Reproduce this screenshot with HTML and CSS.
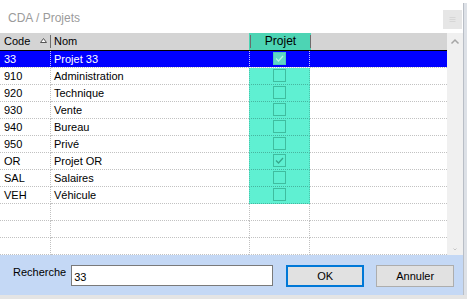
FILE: index.html
```
<!DOCTYPE html>
<html lang="fr">
<head>
    <meta charset="UTF-8">
    <title>CDA / Projets</title>
    <link rel="stylesheet" href="styles.css">
</head>
<body>
    <div class="screen">
        <div class="top-strip"></div>
        <div class="main">
            <div class="dialog">
                <div class="titlebar">
                    <span class="title">CDA / Projets</span>
                    <span class="close">
                        <svg width="19" height="19" viewBox="0 0 19 19"><path d="M6.5 7.5h6M6.5 9.5h6M6.5 11.5h6" stroke="#d6d6d6" stroke-width="1"/></svg>
                    </span>
                </div>
                <div class="content">
                    <div class="grid">
                        <div class="head">
                            <div class="hcell code">Code
                                <svg class="sort" width="7" height="5" viewBox="0 0 7 5"><path d="M0.5 4.5L3.5 0.5L6.5 4.5Z" fill="#fff" stroke="#555" stroke-width="1"/></svg>
                            </div>
                            <span class="sep"></span>
                            <div class="hcell nom">Nom</div>
                            <div class="hcell projet"><span class="sep"></span><span class="ptitle">Projet</span><span class="sep"></span></div>
                            <div class="hcell rest"></div>
                        </div>

                        <div class="row sel">
                            <div class="cell code">33</div>
                            <div class="cell nom">Projet 33</div>
                            <div class="cell projet"><svg class="box" width="13" height="13" viewBox="0 0 13 13"><rect x="0.5" y="0.5" width="12" height="12" fill="#5fd6c6" stroke="#4fc9b7"/><path d="M3 6.5L5.5 9L10 4" fill="none" stroke="#b6f2e6" stroke-width="1.3"/></svg></div>
                            <div class="cell rest"></div>
                        </div>
                        <div class="row">
                            <div class="cell code">910</div>
                            <div class="cell nom">Administration</div>
                            <div class="cell projet"><svg class="box" width="13" height="13" viewBox="0 0 13 13"><rect x="0.5" y="0.5" width="12" height="12" fill="none" stroke="#3fbd9f"/></svg></div>
                            <div class="cell rest"></div>
                        </div>
                        <div class="row">
                            <div class="cell code">920</div>
                            <div class="cell nom">Technique</div>
                            <div class="cell projet"><svg class="box" width="13" height="13" viewBox="0 0 13 13"><rect x="0.5" y="0.5" width="12" height="12" fill="none" stroke="#3fbd9f"/></svg></div>
                            <div class="cell rest"></div>
                        </div>
                        <div class="row">
                            <div class="cell code">930</div>
                            <div class="cell nom">Vente</div>
                            <div class="cell projet"><svg class="box" width="13" height="13" viewBox="0 0 13 13"><rect x="0.5" y="0.5" width="12" height="12" fill="none" stroke="#3fbd9f"/></svg></div>
                            <div class="cell rest"></div>
                        </div>
                        <div class="row">
                            <div class="cell code">940</div>
                            <div class="cell nom">Bureau</div>
                            <div class="cell projet"><svg class="box" width="13" height="13" viewBox="0 0 13 13"><rect x="0.5" y="0.5" width="12" height="12" fill="none" stroke="#3fbd9f"/></svg></div>
                            <div class="cell rest"></div>
                        </div>
                        <div class="row">
                            <div class="cell code">950</div>
                            <div class="cell nom">Privé</div>
                            <div class="cell projet"><svg class="box" width="13" height="13" viewBox="0 0 13 13"><rect x="0.5" y="0.5" width="12" height="12" fill="none" stroke="#3fbd9f"/></svg></div>
                            <div class="cell rest"></div>
                        </div>
                        <div class="row">
                            <div class="cell code">OR</div>
                            <div class="cell nom">Projet OR</div>
                            <div class="cell projet"><svg class="box" width="13" height="13" viewBox="0 0 13 13"><rect x="0.5" y="0.5" width="12" height="12" fill="none" stroke="#3fbd9f"/><path d="M3 6.5L5.5 9L10 4" fill="none" stroke="#35a88c" stroke-width="1.3"/></svg></div>
                            <div class="cell rest"></div>
                        </div>
                        <div class="row">
                            <div class="cell code">SAL</div>
                            <div class="cell nom">Salaires</div>
                            <div class="cell projet"><svg class="box" width="13" height="13" viewBox="0 0 13 13"><rect x="0.5" y="0.5" width="12" height="12" fill="none" stroke="#3fbd9f"/></svg></div>
                            <div class="cell rest"></div>
                        </div>
                        <div class="row">
                            <div class="cell code">VEH</div>
                            <div class="cell nom">Véhicule</div>
                            <div class="cell projet"><svg class="box" width="13" height="13" viewBox="0 0 13 13"><rect x="0.5" y="0.5" width="12" height="12" fill="none" stroke="#3fbd9f"/></svg></div>
                            <div class="cell rest"></div>
                        </div>

                        <div class="row empty">
                            <div class="cell code"></div><div class="cell nom"></div><div class="cell projet"></div><div class="cell rest"></div>
                        </div>
                        <div class="row empty">
                            <div class="cell code"></div><div class="cell nom"></div><div class="cell projet"></div><div class="cell rest"></div>
                        </div>
                        <div class="row empty">
                            <div class="cell code"></div><div class="cell nom"></div><div class="cell projet"></div><div class="cell rest"></div>
                        </div>
                    </div>
                    <div class="scrollbar">
                        <svg width="16" height="17" viewBox="0 0 16 17"><path d="M4.5 10.5L8 7L11.5 10.5" fill="none" stroke="#a6a6a6" stroke-width="1.5"/></svg>
                        <svg width="16" height="9" viewBox="0 0 16 9"><path d="M6.5 3.5L8 5L9.5 3.5" fill="none" stroke="#c4c4c4" stroke-width="1"/></svg>
                    </div>
                </div>
                <div class="panel">
                    <label class="search-label" for="search">Recherche</label>
                    <input class="search" id="search" type="text" value="33">
                    <button class="btn ok">OK</button>
                    <button class="btn">Annuler</button>
                </div>
            </div>
            <div class="side"></div>
        </div>
        <div class="bottom-strip"></div>
    </div>
</body>
</html>
```

FILE: styles.css
```
body {
    margin: 0;
    font-family: 'Liberation Sans', Arial, sans-serif;
    font-size: 11px;
    color: #000;
    background-color: #fff;
}
.screen {
    width: 467px;
    height: 299px;
    display: flex;
    flex-direction: column;
    overflow: hidden;
}
.top-strip {
    height: 3px;
    background-color: #fff;
}
.main {
    display: flex;
    height: 292px;
}
.dialog {
    width: 463px;
    display: flex;
    flex-direction: column;
    background-color: #fff;
}
.side {
    width: 3px;
    border-left: 1px solid #b9bec6;
    background-color: #dde1e7;
}
.bottom-strip {
    height: 4px;
    background-color: #e4e4e4;
}

/* title bar */
.titlebar {
    height: 30px;
    display: flex;
    justify-content: space-between;
    align-items: flex-start;
}
.title {
    margin: 8px 0 0 8px;
    font-size: 12px;
    line-height: 15px;
    color: #9b9b9b;
}
.close {
    width: 19px;
    height: 19px;
    margin: 7px 1px 0 0;
    background-color: #e6e6e6;
    display: flex;
}

/* grid */
.content {
    display: flex;
    height: 222px;
}
.grid {
    width: 447px;
    display: flex;
    flex-direction: column;
}
.head {
    height: 17px;
    display: flex;
    align-items: center;
    background-color: #d4d4d4;
    border-bottom: 1px solid #000;
}
.hcell {
    height: 17px;
    line-height: 17px;
    display: flex;
    align-items: center;
    box-sizing: border-box;
}
.hcell.code {
    width: 50px;
    padding-left: 4px;
}
.sort {
    margin-left: 10px;
    margin-top: -3px;
}
.sep {
    width: 1px;
    height: 13px;
    background-color: #6c6c6c;
}
.hcell.nom {
    width: 198px;
    padding-left: 3px;
}
.hcell.projet {
    width: 62px;
    background-color: #4dd4b4;
    padding-left: 1px;
}
.ptitle {
    flex: 1;
    text-align: center;
    font-size: 12px;
}
.hcell.rest {
    flex: 1;
}

.row {
    display: flex;
    height: 17px;
}
.cell {
    height: 17px;
    line-height: 16px;
    box-sizing: border-box;
    border-bottom: 1px dotted rgba(0, 0, 0, 0.24);
    white-space: nowrap;
}
.cell.code {
    width: 51px;
    padding-left: 4px;
    border-right: 1px dotted rgba(0, 0, 0, 0.24);
}
.cell.nom {
    width: 198px;
    padding-left: 3px;
}
.cell.projet {
    width: 61px;
    background-color: #5ff0d2;
    border-left: 1px dotted rgba(0, 0, 0, 0.18);
    border-right: 1px dotted rgba(0, 0, 0, 0.18);
    display: flex;
    justify-content: center;
    padding-top: 1px;
}
.box {
    display: block;
}
.cell.rest {
    flex: 1;
}
.row.sel .cell {
    color: #fff;
    background: linear-gradient(#0000ff, #0000ff) 0 0 / 100% 16px no-repeat border-box;
}
.row.sel .cell.code,
.row.sel .cell.projet {
    border-right-color: rgba(255, 255, 255, 0.75);
}
.row.sel .cell.projet {
    border-left-color: rgba(255, 255, 255, 0.75);
}
.row.empty .cell.projet {
    background-color: #fff;
    border-left-color: rgba(0, 0, 0, 0.24);
    border-right-color: rgba(0, 0, 0, 0.24);
}

.scrollbar {
    width: 16px;
    background-color: #f0f0f0;
    display: flex;
    flex-direction: column;
    justify-content: space-between;
    padding-bottom: 1px;
}
.scrollbar svg {
    display: block;
}

/* search panel */
.panel {
    height: 40px;
    box-sizing: border-box;
    background-color: #c4d8f5;
    display: flex;
    align-items: flex-start;
    padding: 10px 0 0 13px;
}
.search-label {
    line-height: 13px;
    margin-top: 1px;
    margin-right: 5px;
}
.search {
    width: 202px;
    height: 21px;
    box-sizing: border-box;
    margin: 0;
    border: 1px solid #7a7a7a;
    padding: 2px 2px 0;
    font-family: 'Liberation Sans', Arial, sans-serif;
    font-size: 11px;
    outline: none;
}
.btn {
    width: 78px;
    height: 22px;
    margin: 0 0 0 12px;
    box-sizing: border-box;
    border: 1px solid #adadad;
    background-color: #e1e1e1;
    font-family: 'Liberation Sans', Arial, sans-serif;
    font-size: 11px;
    padding: 0;
}
.btn.ok {
    margin-left: 13px;
    border: 2px solid #0078d7;
}
```
